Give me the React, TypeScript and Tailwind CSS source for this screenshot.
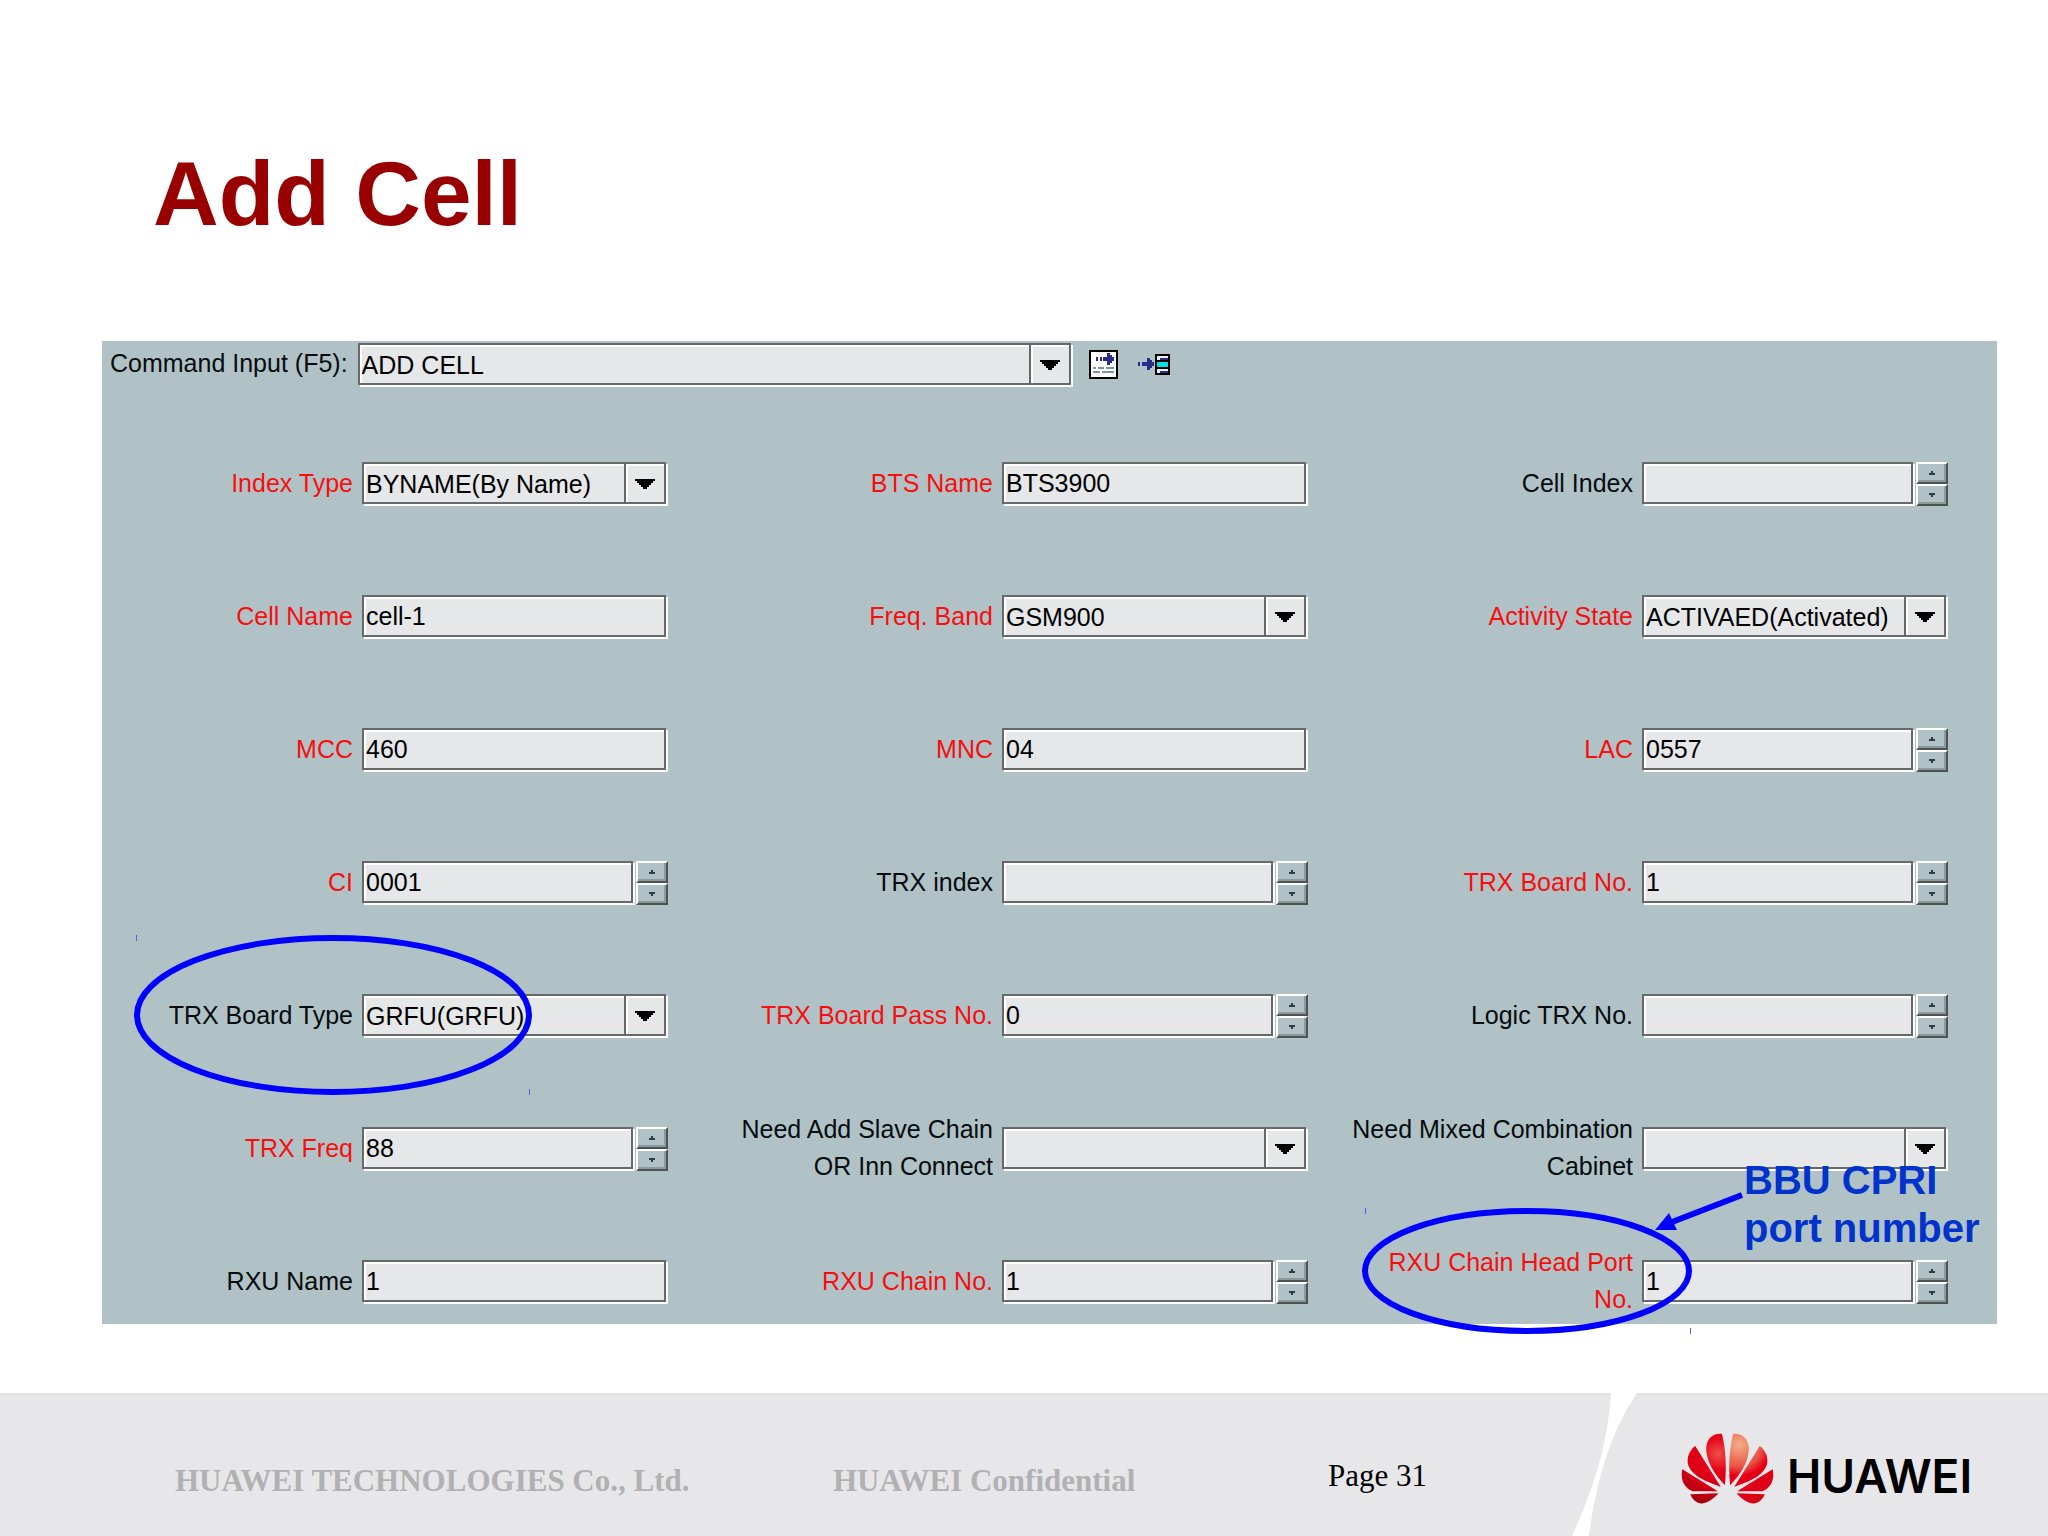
import { useId } from "react";

type FieldKind = "text" | "select" | "spinner";

interface Field {
  label: string;
  value: string;
  kind: FieldKind;
  required?: boolean;
}

const FIELDS: Field[] = [
  { label: "Index Type", value: "BYNAME(By Name)", kind: "select", required: true },
  { label: "BTS Name", value: "BTS3900", kind: "text", required: true },
  { label: "Cell Index", value: "", kind: "spinner" },
  { label: "Cell Name", value: "cell-1", kind: "text", required: true },
  { label: "Freq. Band", value: "GSM900", kind: "select", required: true },
  { label: "Activity State", value: "ACTIVAED(Activated)", kind: "select", required: true },
  { label: "MCC", value: "460", kind: "text", required: true },
  { label: "MNC", value: "04", kind: "text", required: true },
  { label: "LAC", value: "0557", kind: "spinner", required: true },
  { label: "CI", value: "0001", kind: "spinner", required: true },
  { label: "TRX index", value: "", kind: "spinner" },
  { label: "TRX Board No.", value: "1", kind: "spinner", required: true },
  { label: "TRX Board Type", value: "GRFU(GRFU)", kind: "select" },
  { label: "TRX Board Pass No.", value: "0", kind: "spinner", required: true },
  { label: "Logic TRX No.", value: "", kind: "spinner" },
  { label: "TRX Freq", value: "88", kind: "spinner", required: true },
  { label: "Need Add Slave Chain\nOR Inn Connect", value: "", kind: "select" },
  { label: "Need Mixed Combination\nCabinet", value: "", kind: "select" },
  { label: "RXU Name", value: "1", kind: "text" },
  { label: "RXU Chain No.", value: "1", kind: "spinner", required: true },
  { label: "RXU Chain Head Port\nNo.", value: "1", kind: "spinner", required: true },
];

// sunken box: dark outline, white inner top/left, white outer bottom/right
const BOX =
  "h-[42px] min-w-0 rounded-none border-2 border-[#66696b] bg-[#e5e7e9] pl-[2px] text-[25px] text-black shadow-[inset_2px_2px_0_#fff,2px_2px_0_#fff] outline-none";

function Combo({ id, value }: { id: string; value: string }) {
  return (
    <div className="relative flex h-11 w-full pr-[2px]">
      <select id={id} defaultValue={value} className={`${BOX} w-full appearance-none pt-[2px] pr-11`}>
        <option value={value}>{value}</option>
      </select>
      <span className="pointer-events-none absolute top-[2px] right-[4px] flex h-[38px] w-[40px] items-center justify-center border-l-2 border-[#66696b] pt-[2px] shadow-[inset_2px_2px_0_#fff]">
        <svg viewBox="0 0 20 10" className="h-[10px] w-5" shapeRendering="crispEdges">
          <path d="M0 0h20v2h-2v2h-2v2h-2v2h-2v2h-4v-2h-2v-2h-2v-2h-2v-2h-2z" fill="#000" />
        </svg>
      </span>
    </div>
  );
}

function StepButton({ label, down }: { label: string; down?: boolean }) {
  return (
    <button
      type="button"
      aria-label={label}
      className="flex h-[22px] w-8 items-center justify-center border-2 border-t-white border-r-[#4d5254] border-b-[#4d5254] border-l-white bg-[#b1c2c6] shadow-[inset_-2px_-2px_0_#8d9a9c]"
    >
      <svg viewBox="0 0 6 4" className="h-1 w-[6px]" shapeRendering="crispEdges">
        <path d={down ? "M0 0h6v2h-2v2h-2v-2h-2z" : "M2 0h2v2h2v2h-6v-2h2z"} fill="#333b3d" />
      </svg>
    </button>
  );
}

function Spinner({ id, value }: { id: string; value: string }) {
  return (
    <div className="flex h-11 w-full gap-[3px]">
      <input id={id} type="text" defaultValue={value} className={`${BOX} flex-1`} />
      <div className="flex flex-col">
        <StepButton label="Increase" />
        <StepButton label="Decrease" down />
      </div>
    </div>
  );
}

function FormField({ field }: { field: Field }) {
  const id = useId();
  return (
    <div className="flex min-h-20 items-center justify-end gap-[9px]">
      <label
        htmlFor={id}
        className={`pb-[2px] text-right text-[25px] leading-[37px] whitespace-pre-line ${
          field.required ? "text-[#f50f0f]" : "text-[#050c0e]"
        }`}
      >
        {field.label}
      </label>
      <div className="w-[306px] shrink-0">
        {field.kind === "select" && <Combo id={id} value={field.value} />}
        {field.kind === "spinner" && <Spinner id={id} value={field.value} />}
        {field.kind === "text" && (
          <div className="flex h-11 pr-[2px]">
            <input id={id} type="text" defaultValue={field.value} className={`${BOX} w-full`} />
          </div>
        )}
      </div>
    </div>
  );
}

function CommandBar() {
  return (
    <div className="flex items-center pt-[2px] pl-2">
      <label htmlFor="command" className="mr-[10px] pb-[4px] text-[25px] leading-[37px] text-[#050c0e]">
        Command Input (F5):
      </label>
      <div className="w-[715px]">
        <Combo id="command" value="ADD CELL" />
      </div>
      <button type="button" aria-label="Run command" className="ml-4 pb-[2px]">
        <svg viewBox="0 0 29 29" className="size-[29px]" shapeRendering="crispEdges">
          <rect x="1" y="1" width="27" height="27" fill="#fff" stroke="#000" strokeWidth="2" />
          <path d="M7 7h2v4h-2zM11 7h2v4h-2zM14 7h4v-4h3v2h2v2h2v4h-2v2h-2v2h-3v-4h-4z" fill="#2c2c8c" />
          <path d="M4 17h3v2h-3zM9 17h6v2h-6zM17 17h8v2h-8zM4 21h7v2h-7zM13 21h12v2h-12z" fill="#7d9498" />
        </svg>
      </button>
      <button type="button" aria-label="Add to list" className="ml-5 pb-[2px]">
        <svg viewBox="0 0 32 21" className="h-[21px] w-8" shapeRendering="crispEdges">
          <path d="M0 8h2v4h-2zM4 8h5v-4h3v2h2v2h2v4h-2v2h-2v2h-3v-4h-5z" fill="#2c2c8c" />
          <rect x="17" y="0" width="15" height="21" fill="#000" />
          <path d="M19 2h11v4h-11zM19 15h11v4h-11z" fill="#2c2c8c" />
          <path d="M19 2h11v2h-11zM19 4h3v2h-3zM19 15h11v2h-11zM19 17h3v2h-3z" fill="#e8f0fa" />
          <path d="M19 8h11v5h-11z" fill="#00e1e6" />
        </svg>
      </button>
    </div>
  );
}

/* Callouts drawn over the form */
function Callouts() {
  return (
    <div className="pointer-events-none absolute top-0 left-0">
      <svg viewBox="0 0 1895 1010" className="h-[1010px] w-[1895px] max-w-none">
        <g fill="none" stroke="#0000ff" strokeWidth="6">
          <ellipse cx="231" cy="674" rx="196" ry="77" />
          <ellipse cx="1425" cy="930" rx="162" ry="60" />
          <path d="M1640 854L1570 881" />
        </g>
        <path d="M1553 889L1567 872L1575 889Z" fill="#0000ff" />
        <path d="M34.500 594v6M427.500 748v6M1263.500 867v6M1588.500 987v6" stroke="#5a5af0" strokeWidth="1" />
      </svg>
      <p className="absolute top-[815px] left-[1642px] text-[40px] leading-[48px] font-bold whitespace-nowrap text-[#0033cc]">
        BBU CPRI
        <br />
        port number
      </p>
    </div>
  );
}

function Petals() {
  return (
    <>
      <path d="M163 195C136 167 111 132 107 92C105 62 120 38 154 40C165 82 169 138 163 195Z" />
      <path d="M151 200C106 184 56 165 51 126C50 104 60 87 74 77Z" />
      <path d="M142 213H66C38 202 29 176 35 147Z" />
      <path d="M144 219L59 222C66 241 84 253 98 249C114 246 131 234 144 219Z" />
    </>
  );
}

function Logo() {
  return (
    <div className="flex items-start">
      <svg viewBox="31 38 280 213" className="h-[71px] w-[93px]">
        <defs>
          <radialGradient id="left" gradientUnits="userSpaceOnUse" cx="142" cy="100" r="170">
            <stop offset="0" stopColor="#ef5048" />
            <stop offset="0.3" stopColor="#e60018" />
            <stop offset="0.6" stopColor="#d60014" />
            <stop offset="1" stopColor="#960008" />
          </radialGradient>
          <radialGradient id="right" gradientUnits="userSpaceOnUse" cx="136" cy="72" r="190">
            <stop offset="0" stopColor="#f2b088" />
            <stop offset="0.35" stopColor="#ea5546" />
            <stop offset="0.5" stopColor="#e60018" />
            <stop offset="1" stopColor="#d80014" />
          </radialGradient>
        </defs>
        <g fill="url(#left)">
          <Petals />
        </g>
        <g fill="url(#right)" transform="translate(342 0) scale(-1 1)">
          <Petals />
        </g>
      </svg>
      <span className="mt-[18px] ml-[13px] font-['Inter',sans-serif] text-[46px] leading-[50px] font-semibold text-black">
        HUAWEI
      </span>
    </div>
  );
}

function Footer() {
  return (
    <footer className="relative mt-auto grid h-[143px] grid-cols-[658fr_495fr_353px_367px] border-t-2 border-[#e2e2e4] bg-[#e7e7e9] pl-[175px] font-['Liberation_Serif',serif]">
      <svg
        viewBox="0 0 80 143"
        preserveAspectRatio="none"
        className="absolute -top-[2px] right-[408px] h-[143px] w-20"
      >
        <path d="M51 0H77C50 40 36 90 29 143H12C34 95 48 50 51 0Z" fill="#fff" />
      </svg>
      <span className="mt-[68px] text-[31px] leading-[36px] font-bold text-[#b1b1b3]">
        HUAWEI TECHNOLOGIES Co., Ltd.
      </span>
      <span className="mt-[68px] text-[31px] leading-[36px] font-bold text-[#b1b1b3]">
        HUAWEI Confidential
      </span>
      <span className="mt-[63px] text-[31px] leading-[36px] text-black">Page 31</span>
      <div className="mt-[38px]">
        <Logo />
      </div>
    </footer>
  );
}

export default function App() {
  return (
    <div className="flex min-h-screen flex-col bg-white font-['Liberation_Sans',Arial,sans-serif]">
      <h1 className="mt-[142px] pl-[153px] text-[91px] leading-[104px] font-bold text-[#990000]">
        Add Cell
      </h1>
      <main className="relative mt-[95px] mr-[51px] mb-[69px] ml-[102px] bg-[#b1c2c6] pb-[2px]">
        <CommandBar />
        <form className="mt-[57px] grid grid-cols-[566fr_640fr_640fr] gap-y-[53px] pr-[49px]">
          {FIELDS.map((field) => (
            <FormField key={field.label} field={field} />
          ))}
        </form>
        <Callouts />
      </main>
      <Footer />
    </div>
  );
}
